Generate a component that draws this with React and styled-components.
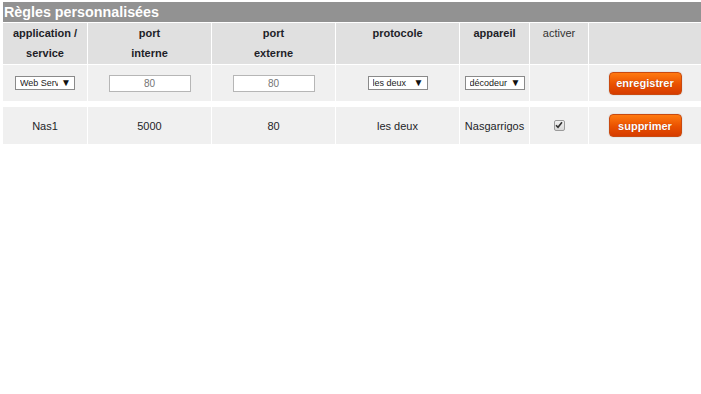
import React from 'react';
import styled, { createGlobalStyle } from 'styled-components';

const GlobalStyle = createGlobalStyle`
  body {
    margin: 0;
    background: #fff;
    font-family: 'Liberation Sans', Arial, sans-serif;
    color: #222;
  }
`;

const COLUMNS = '84px 123px 123px 123px 69px 58px 112px';

const Page = styled.div`
  padding: 2px 0 0 3px;
  display: flex;
  flex-direction: column;
  gap: 1px;
`;

const Title = styled.div`
  height: 20px;
  line-height: 20px;
  background: #929292;
  color: #fff;
  font-weight: bold;
  font-size: 14.3px;
  padding-left: 1px;
`;

const Table = styled.div`
  display: flex;
  flex-direction: column;
  gap: 1px;
`;

const Row = styled.div`
  display: grid;
  grid-template-columns: ${COLUMNS};
  column-gap: 1px;
  height: ${(p) => p.$height}px;
  margin-top: ${(p) => p.$spaced ? '5px' : '0'};
`;

const HeadCell = styled.div`
  background: #e0e0e0;
  text-align: center;
  font-size: 11px;
  line-height: 20px;
  font-weight: ${(p) => (p.$light ? 'normal' : 'bold')};
  color: ${(p) => (p.$light ? '#333' : '#1e1e28')};
`;

const Cell = styled.div`
  background: #f0f0f0;
  display: flex;
  align-items: center;
  justify-content: center;
  font-size: 11px;
  color: #1e1e28;
`;

const SelectBox = styled.div`
  width: ${(p) => p.$width}px;
  height: 14px;
  box-sizing: border-box;
  border: 1px solid #8a8a8a;
  background: #fff;
  display: flex;
  align-items: center;
  gap: 3px;
  padding: 0 3px 0 4px;
  font-size: 9px;
  color: #222;
  white-space: nowrap;
`;

const SelectLabel = styled.span`
  flex: 1;
  min-width: 0;
  overflow: hidden;
`;

const Arrow = styled.span`
  font-size: 10px;
  line-height: 10px;
  color: #111;
`;

const TextInput = styled.input`
  width: 82px;
  height: 17px;
  box-sizing: border-box;
  border: 1px solid #b6b6b6;
  background: #fff;
  text-align: center;
  font-family: 'Liberation Sans', Arial, sans-serif;
  font-size: 10px;
  color: #8a8a8a;
  padding: 0;
  outline: none;
`;

const Button = styled.button`
  width: 73px;
  height: 23px;
  box-sizing: border-box;
  border: 1px solid #c94a10;
  border-radius: 4px;
  background: linear-gradient(#ff7a10, #e95000 55%, #d63c00);
  box-shadow: 0 0 0 1px #e6e6e6;
  color: #fff;
  font-family: 'Liberation Sans', Arial, sans-serif;
  font-weight: bold;
  font-size: 11px;
  text-shadow: 0 0 1px #a83000;
  padding: 0;
  cursor: pointer;
`;

const Check = styled.span`
  width: 11px;
  height: 11px;
  box-sizing: border-box;
  border: 1px solid #9a9a9a;
  border-radius: 2px;
  background: linear-gradient(#f2f2f2, #d8d8d8);
  display: flex;
  align-items: center;
  justify-content: center;
  margin-top: -1px;
`;

function Select({ label, width }) {
  return (
    <SelectBox $width={width}>
      <SelectLabel>{label}</SelectLabel>
      <Arrow>▼</Arrow>
    </SelectBox>
  );
}

export default function App() {
  return (
    <>
      <GlobalStyle />
      <Page>
        <Title>Règles personnalisées</Title>
        <Table>
          <Row $height={41}>
            <HeadCell>application /<br />service</HeadCell>
            <HeadCell>port<br />interne</HeadCell>
            <HeadCell>port<br />externe</HeadCell>
            <HeadCell>protocole</HeadCell>
            <HeadCell>appareil</HeadCell>
            <HeadCell $light>activer</HeadCell>
            <HeadCell />
          </Row>
          <Row $height={36}>
            <Cell><Select label="Web Serv" width={60} /></Cell>
            <Cell><TextInput placeholder="80" readOnly /></Cell>
            <Cell><TextInput placeholder="80" readOnly /></Cell>
            <Cell><Select label="les deux" width={60} /></Cell>
            <Cell><Select label="décodeur" width={60} /></Cell>
            <Cell />
            <Cell><Button>enregistrer</Button></Cell>
          </Row>
          <Row $height={37} $spaced>
            <Cell>Nas1</Cell>
            <Cell>5000</Cell>
            <Cell>80</Cell>
            <Cell>les deux</Cell>
            <Cell>Nasgarrigos</Cell>
            <Cell>
              <Check>
                <svg width="8" height="8" viewBox="0 0 8 8">
                  <path d="M1 4.2 L3 6.3 L7 1.2" fill="none" stroke="#333" strokeWidth="1.6" />
                </svg>
              </Check>
            </Cell>
            <Cell><Button>supprimer</Button></Cell>
          </Row>
        </Table>
      </Page>
    </>
  );
}
